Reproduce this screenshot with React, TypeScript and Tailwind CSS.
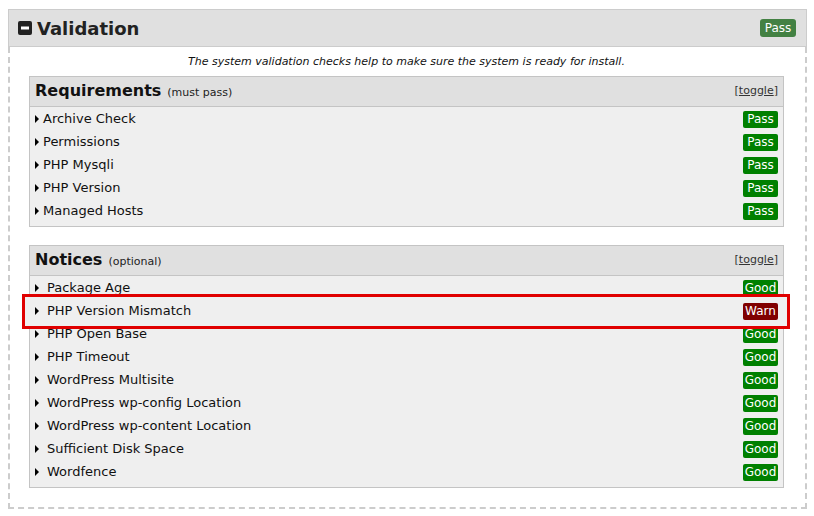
import React from "react";

type Check = { label: string; status: "Pass" | "Good" | "Warn"; highlight?: boolean };

const requirements: Check[] = [
  { label: "Archive Check", status: "Pass" },
  { label: "Permissions", status: "Pass" },
  { label: "PHP Mysqli", status: "Pass" },
  { label: "PHP Version", status: "Pass" },
  { label: "Managed Hosts", status: "Pass" },
];

const notices: Check[] = [
  { label: "Package Age", status: "Good" },
  { label: "PHP Version Mismatch", status: "Warn", highlight: true },
  { label: "PHP Open Base", status: "Good" },
  { label: "PHP Timeout", status: "Good" },
  { label: "WordPress Multisite", status: "Good" },
  { label: "WordPress wp-config Location", status: "Good" },
  { label: "WordPress wp-content Location", status: "Good" },
  { label: "Sufficient Disk Space", status: "Good" },
  { label: "Wordfence", status: "Good" },
];

function Badge({ status }: { status: Check["status"] }) {
  const bg = status === "Warn" ? "bg-[#800000]" : "bg-[#008000]";
  return (
    <span
      className={`inline-flex h-[17px] w-[35px] items-center justify-center rounded-[2px] text-[12px] leading-none text-white ${bg}`}
    >
      {status}
    </span>
  );
}

function Arrow() {
  return (
    <svg width="4" height="8" viewBox="0 0 4 8" className="shrink-0">
      <path d="M0 0 L4 4 L0 8 Z" fill="#000" />
    </svg>
  );
}

function RowContent({ item, gap }: { item: Check; gap: string }) {
  return (
    <>
      <Arrow />
      <span className={`${gap} flex-1 text-[13px] text-[#111]`}>{item.label}</span>
      <Badge status={item.status} />
    </>
  );
}

function Panel({ title, note, items, gap }: { title: string; note: string; items: Check[]; gap: string }) {
  return (
    <div className="border border-[#c4c4c4] bg-[#efefef]">
      <div className="flex h-[30px] items-center justify-between border-b border-[#c4c4c4] bg-[#e0e0e0] pr-[5px] pl-[5px]">
        <div className="flex items-baseline">
          <span className="text-[16px] font-bold text-[#111]">{title}</span>
          <span className="ml-[6px] text-[11px] text-[#222]">{note}</span>
        </div>
        <span className="text-[11px] text-[#333]">
          [<span className="underline">toggle</span>]
        </span>
      </div>
      <div className="pt-[1px] pb-[3px]">
        {items.map((item) => (
          <div key={item.label} className="relative flex h-[23px] items-center pr-[5px] pl-[5px]">
            <RowContent item={item} gap={gap} />
            {item.highlight && (
              <div className="absolute -top-[6px] -right-[7px] -bottom-[6px] -left-[8px] z-10 flex items-center border-[3px] border-[#e00000] bg-[#efefef] pr-[9px] pl-[10px]">
                <RowContent item={item} gap={gap} />
              </div>
            )}
          </div>
        ))}
      </div>
    </div>
  );
}

export default function App() {
  return (
    <div className="min-h-[516px] bg-white pt-[9px] pl-[8px] font-['DejaVu_Sans',Verdana,sans-serif]">
      <div className="w-[799px]">
        <div className="flex h-[38px] items-center justify-between border border-[#cccccc] bg-[#e0e0e0] pr-[10px] pl-[9px]">
          <div className="flex items-center">
            <svg width="14" height="14" viewBox="0 0 14 14">
              <rect x="0" y="0" width="14" height="14" rx="2" fill="#222" />
              <rect x="3" y="5.5" width="8" height="3" fill="#fff" />
            </svg>
            <span className="ml-[5px] text-[18px] font-bold text-[#222]">Validation</span>
          </div>
          <span className="inline-flex h-[18px] w-[36px] items-center justify-center rounded-[3px] bg-[#438143] text-[12px] text-white">
            Pass
          </span>
        </div>
        <div className="border-2 border-t-0 border-dashed border-[#cccccc] pt-[7px] pr-[21px] pb-[19px] pl-[19px]">
          <p className="mb-[5px] text-center text-[11px] italic text-[#111]">
            The system validation checks help to make sure the system is ready for install.
          </p>
          <Panel title="Requirements" note="(must pass)" items={requirements} gap="ml-[4px]" />
          <div className="h-[18px]" />
          <Panel title="Notices" note="(optional)" items={notices} gap="ml-[8px]" />
        </div>
      </div>
    </div>
  );
}
